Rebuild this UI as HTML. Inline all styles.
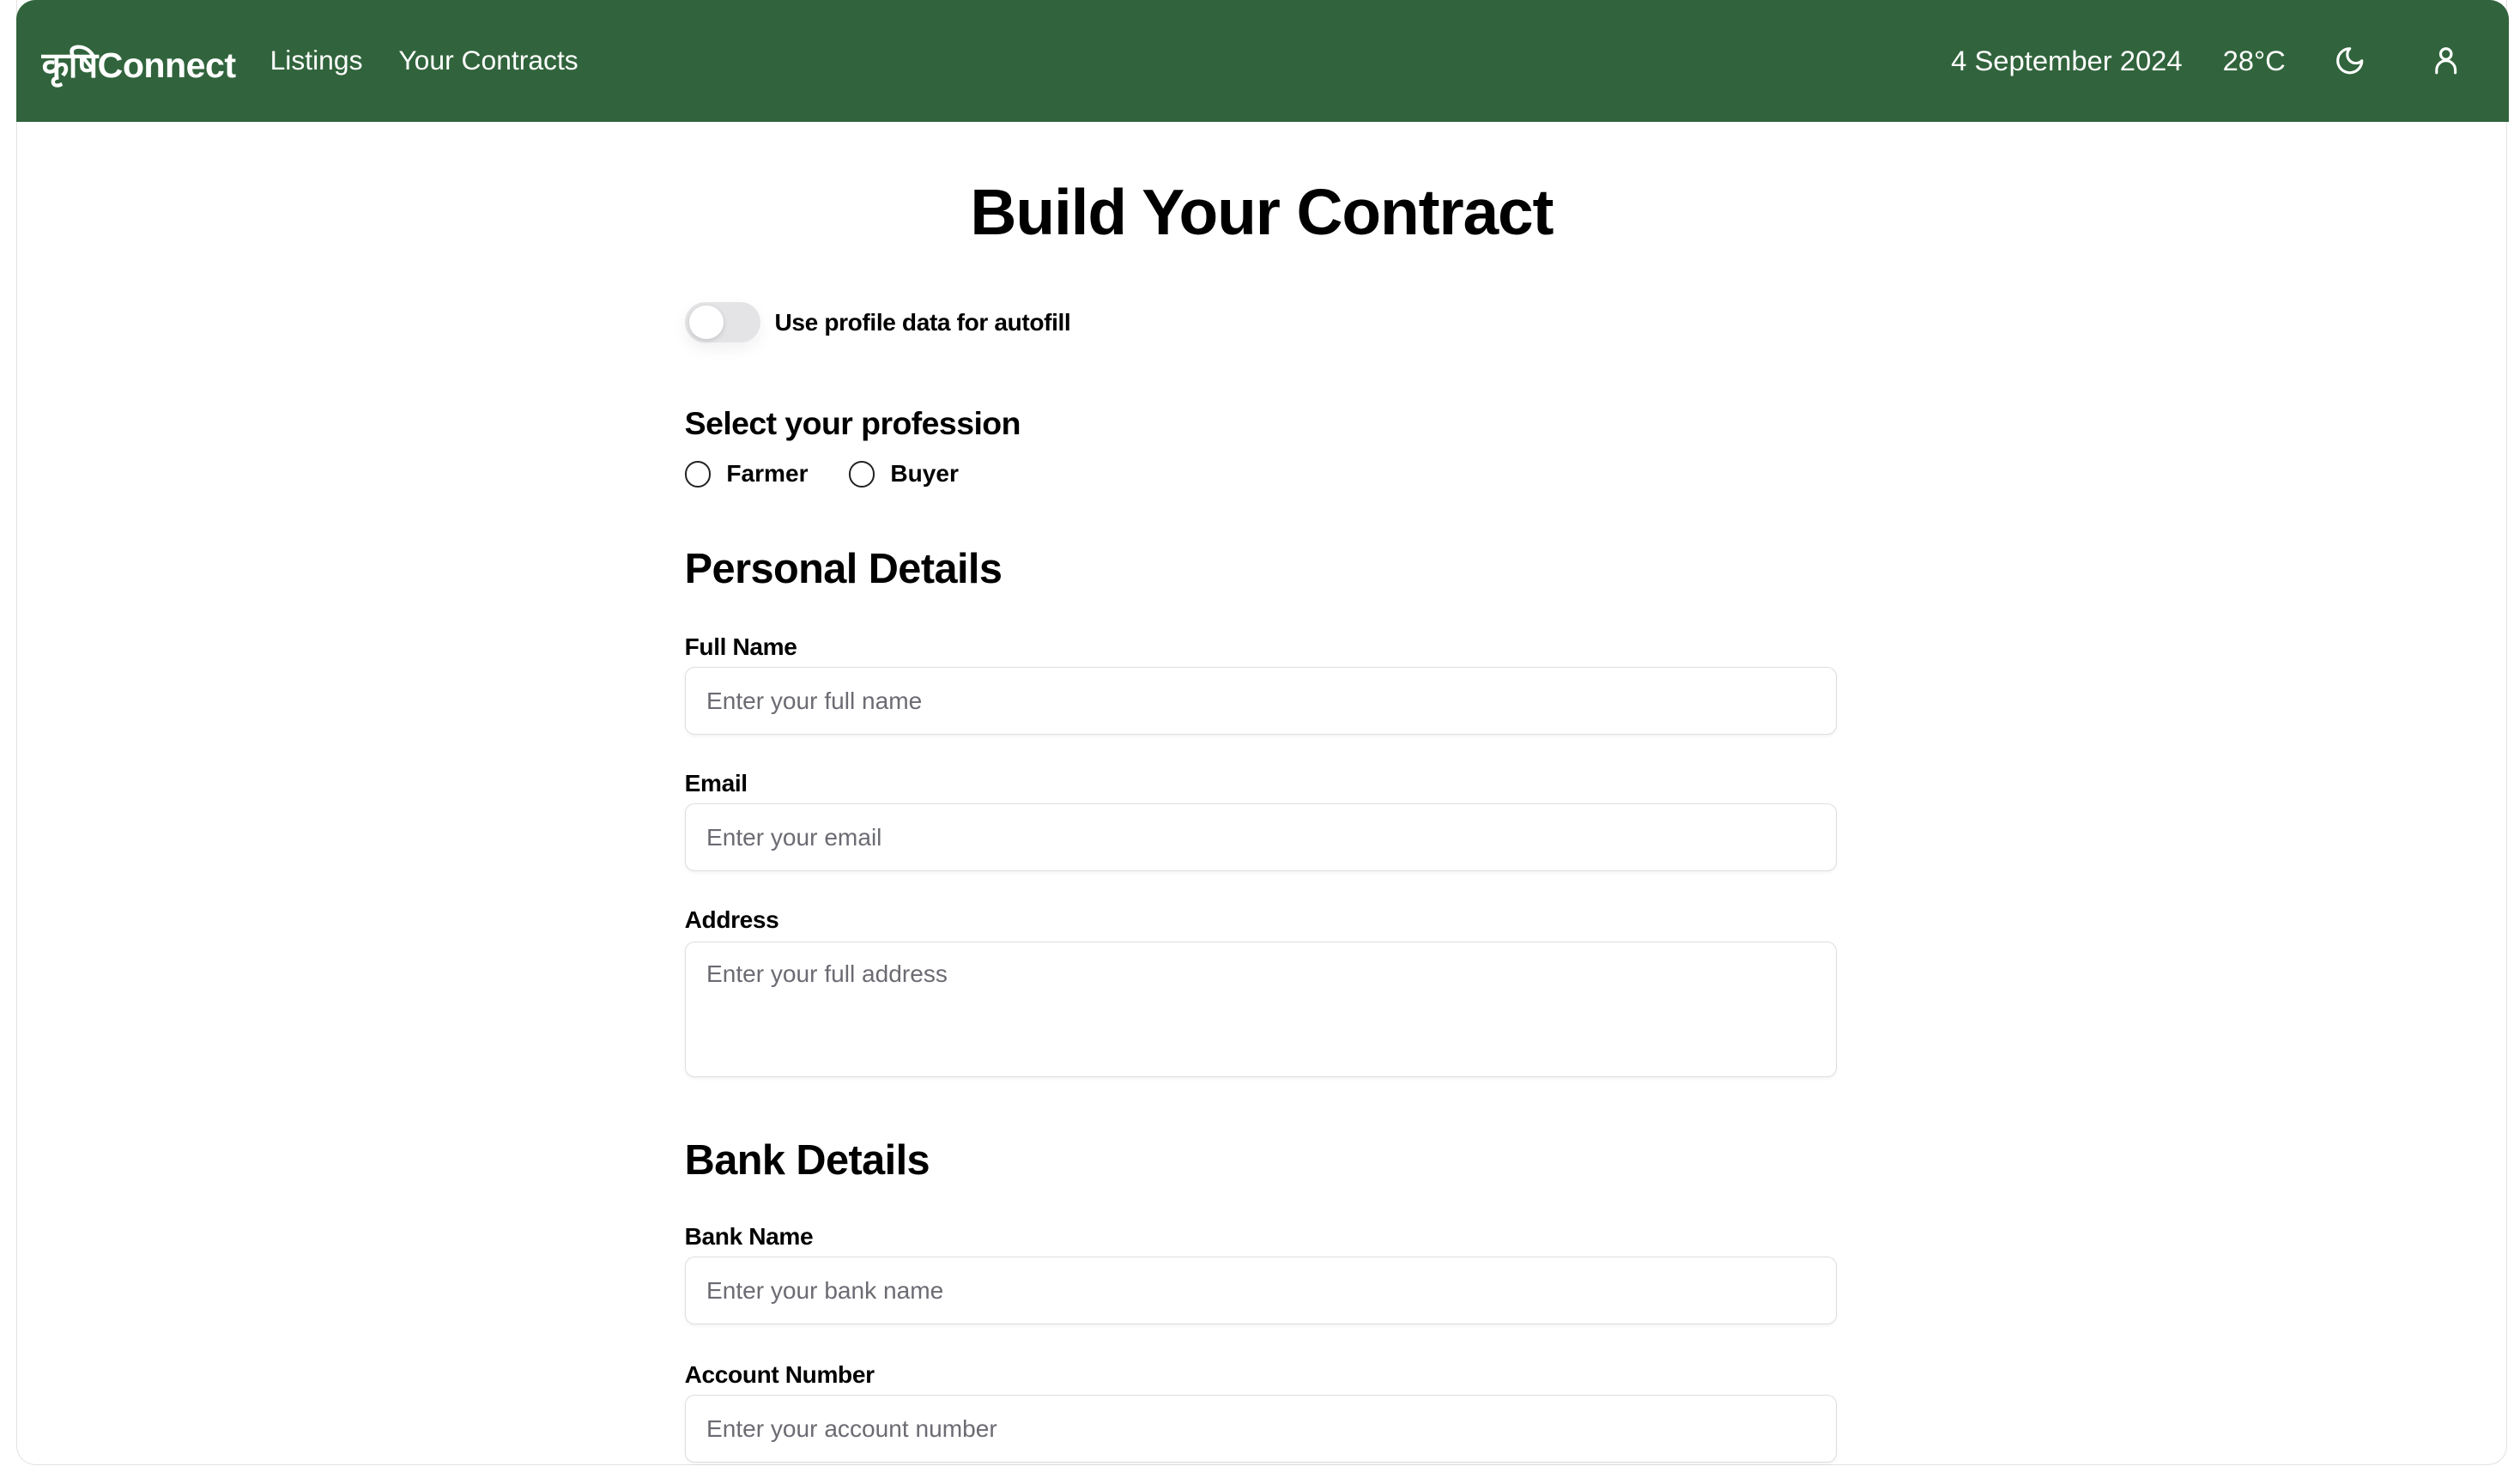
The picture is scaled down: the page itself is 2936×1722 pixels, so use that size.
<!DOCTYPE html>
<html><head><meta charset="utf-8">
<style>
html,body{margin:0;padding:0;background:#fff;width:2936px;height:1722px;overflow:hidden}
#z{zoom:1.87245;width:1568px;height:920px;position:relative;font-family:"Liberation Sans","DejaVu Sans",sans-serif;color:#000}
.frame{position:absolute;left:10px;top:0;width:1549px;height:911px;border:1px solid #e2e2e2;border-top:none;border-radius:0 0 12px 12px}
.hdr{position:absolute;left:10px;top:0;width:1551px;height:76px;background:#31643c;border-radius:12px 12px 0 0;color:#fff}
.a{position:absolute;white-space:nowrap}
.lbl{position:absolute;left:426px;font-size:15px;font-weight:bold;letter-spacing:-0.2px}
.inp{position:absolute;left:426px;width:716px;height:41px;border:1px solid #dedede;border-radius:6px;box-shadow:0 1px 2px rgba(0,0,0,.05)}
.inp span{position:absolute;left:13px;top:12px;font-size:15px;color:#6b6b73}
h2{position:absolute;left:426px;margin:0;font-size:26px;font-weight:bold;letter-spacing:-0.3px}
.radio{position:absolute;width:14px;height:14px;border:1.5px solid #222;border-radius:50%}
</style></head><body><div id="z">
<div class="frame"></div>
<div class="hdr">
 <div class="a" style="left:16px;top:25px;font-size:22px;font-weight:bold;letter-spacing:-0.3px">कृषिConnect</div>
 <div class="a" style="left:158px;top:28px;font-size:17px">Listings</div>
 <div class="a" style="left:238px;top:28px;font-size:17px">Your Contracts</div>
 <div class="a" style="left:1204px;top:28px;font-size:17.5px">4 September 2024</div>
 <div class="a" style="left:1373px;top:28px;font-size:17.5px">28°C</div>
 <svg class="a" style="left:1442px;top:28px" width="20" height="20" viewBox="0 0 24 24" fill="none" stroke="#fff" stroke-width="2" stroke-linecap="round" stroke-linejoin="round"><path d="M12 3a6 6 0 0 0 9 9 9 9 0 1 1-9-9Z"/></svg>
 <svg class="a" style="left:1502px;top:28px" width="20" height="20" viewBox="0 0 24 24" fill="none" stroke="#fff" stroke-width="2" stroke-linecap="round"><circle cx="12" cy="7" r="4"/><path d="M5 21v-2a7 7 0 0 1 14 0v2"/></svg>
</div>
<div class="a" style="left:0;width:1570px;text-align:center;top:109px;font-size:40px;font-weight:bold;letter-spacing:-0.6px">Build Your Contract</div>
<div class="a" style="left:426px;top:188px;width:47px;height:25px;border-radius:13px;background:#e4e4e7;box-shadow:0 4px 10px rgba(0,0,0,.06)"></div>
<div class="a" style="left:429px;top:190px;width:21px;height:21px;border-radius:50%;background:#fff;box-shadow:0 1px 3px rgba(0,0,0,.15)"></div>
<div class="a" style="left:482px;top:192px;font-size:15px;font-weight:bold;letter-spacing:-0.2px">Use profile data for autofill</div>
<div class="a" style="left:426px;top:252px;font-size:20px;font-weight:bold;letter-spacing:-0.3px">Select your profession</div>
<div class="radio" style="left:426px;top:287px"></div>
<div class="a" style="left:452px;top:286px;font-size:15px;font-weight:bold">Farmer</div>
<div class="radio" style="left:528px;top:287px"></div>
<div class="a" style="left:554px;top:286px;font-size:15px;font-weight:bold">Buyer</div>
<h2 style="top:339px">Personal Details</h2>
<div class="lbl" style="top:394px">Full Name</div>
<div class="inp" style="top:415px"><span>Enter your full name</span></div>
<div class="lbl" style="top:479px">Email</div>
<div class="inp" style="top:500px"><span>Enter your email</span></div>
<div class="lbl" style="top:564px">Address</div>
<div class="inp" style="top:586px;height:83px"><span style="top:11px">Enter your full address</span></div>
<h2 style="top:707px">Bank Details</h2>
<div class="lbl" style="top:761px">Bank Name</div>
<div class="inp" style="top:782px"><span>Enter your bank name</span></div>
<div class="lbl" style="top:847px">Account Number</div>
<div class="inp" style="top:868px"><span>Enter your account number</span></div>
</div></body></html>
